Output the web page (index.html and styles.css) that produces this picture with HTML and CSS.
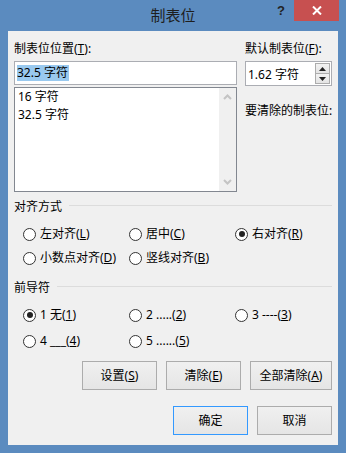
FILE: index.html
```html
<!DOCTYPE html>
<html lang="zh-CN">
<head>
  <meta charset="UTF-8">
  <title>制表位</title>
  <link rel="stylesheet" href="styles.css">
</head>
<body>
  <div class="window">
    <div class="titlebar">
      <div class="title">制表位</div>
      <div class="help">?</div>
      <div class="close">
        <svg width="10" height="9" viewBox="0 0 10 9">
          <path d="M1 0.5 L9 8.5 M9 0.5 L1 8.5" stroke="#fff" stroke-width="2" fill="none"/>
        </svg>
      </div>
    </div>

    <div class="dialog">
      <div class="top">
        <div class="col">
          <div class="label">制表位位置(<u>T</u>):</div>
          <div class="textbox"><span class="sel">32.5 字符</span></div>
          <div class="listbox">
            <div class="items">
              <div>16 字符</div>
              <div>32.5 字符</div>
            </div>
            <div class="scroll">
              <svg width="9" height="6" viewBox="0 0 9 6"><path d="M1 5 L4.5 1.5 L8 5" stroke="#c4c4c4" stroke-width="2" fill="none"/></svg>
              <svg width="9" height="6" viewBox="0 0 9 6"><path d="M1 1 L4.5 4.5 L8 1" stroke="#c4c4c4" stroke-width="2" fill="none"/></svg>
            </div>
          </div>
        </div>
        <div class="col">
          <div class="label">默认制表位(<u>F</u>):</div>
          <div class="spin">
            <span>1.62 字符</span>
            <div class="spin-btns">
              <div class="spin-btn"><svg width="7" height="4" viewBox="0 0 7 4"><path d="M0 4 L3.5 0 L7 4 Z" fill="#222"/></svg></div>
              <div class="spin-btn"><svg width="7" height="4" viewBox="0 0 7 4"><path d="M0 0 L3.5 4 L7 0 Z" fill="#222"/></svg></div>
            </div>
          </div>
          <div class="label clear-label">要清除的制表位:</div>
        </div>
      </div>

      <div class="group-head">对齐方式</div>
      <div class="radios">
        <div class="radio"><span class="dot"></span><span>左对齐(<u>L</u>)</span></div>
        <div class="radio"><span class="dot"></span><span>居中(<u>C</u>)</span></div>
        <div class="radio"><span class="dot on"></span><span>右对齐(<u>R</u>)</span></div>
        <div class="radio"><span class="dot"></span><span>小数点对齐(<u>D</u>)</span></div>
        <div class="radio"><span class="dot"></span><span>竖线对齐(<u>B</u>)</span></div>
      </div>

      <div class="group-head second">前导符</div>
      <div class="radios leader">
        <div class="radio"><span class="dot on"></span><span>1 无(<u>1</u>)</span></div>
        <div class="radio"><span class="dot"></span><span>2 .....(<u>2</u>)</span></div>
        <div class="radio"><span class="dot"></span><span>3 ----(<u>3</u>)</span></div>
        <div class="radio"><span class="dot"></span><span>4 ___(<u>4</u>)</span></div>
        <div class="radio"><span class="dot"></span><span>5 ......(<u>5</u>)</span></div>
      </div>

      <div class="actions">
        <div class="btn"><span>设置(<u>S</u>)</span></div>
        <div class="btn"><span>清除(<u>E</u>)</span></div>
        <div class="btn wide"><span>全部清除(<u>A</u>)</span></div>
      </div>

      <div class="actions footer">
        <div class="btn default">确定</div>
        <div class="btn">取消</div>
      </div>
    </div>
  </div>
</body>
</html>
```

FILE: styles.css
```css
* {
  box-sizing: border-box;
}

body {
  margin: 0;
  font-family: "Noto Sans", "Noto Sans CJK SC", sans-serif;
  font-size: 12px;
  color: #000;
}

u {
  text-underline-offset: 1px;
}

.window {
  width: 346px;
  height: 453px;
  background: #5b8bbf;
  display: flex;
  flex-direction: column;
  padding-bottom: 8px;
}

/* title bar */
.titlebar {
  height: 31px;
  display: flex;
  align-items: flex-start;
  padding: 0 7px 0 76px;
}

.title {
  flex: 1;
  text-align: center;
  font-size: 15px;
  line-height: 30px;
  color: #1e1e1e;
}

.help {
  width: 22px;
  height: 21px;
  margin-right: 2px;
  text-align: center;
  font-family: "Liberation Sans", sans-serif;
  font-weight: bold;
  font-size: 13px;
  line-height: 22px;
  color: #222;
}

.close {
  width: 45px;
  height: 21px;
  background: #c75050;
  display: flex;
  align-items: center;
  justify-content: center;
}

/* dialog body */
.dialog {
  flex: 1;
  margin: 0 8px;
  background: #f0f0f0;
  padding: 10px 6px 0;
  display: flex;
  flex-direction: column;
}

.top {
  display: grid;
  grid-template-columns: 223px 87px;
  column-gap: 8px;
}

.label {
  line-height: 16px;
  white-space: nowrap;
}

.textbox {
  margin-top: 4px;
  height: 24px;
  border: 1px solid #abadb3;
  background: #fff;
  padding: 2px 2px 0;
}

.sel {
  display: inline-block;
  background: #99c9ef;
  line-height: 16px;
  padding-right: 1px;
}

.listbox {
  margin-top: 2px;
  height: 105px;
  border: 1px solid #828790;
  background: #fff;
  display: flex;
}

.items {
  flex: 1;
  padding-left: 3px;
  line-height: 18px;
}

.scroll {
  width: 17px;
  background: #f0f0f0;
  display: flex;
  flex-direction: column;
  justify-content: space-between;
  align-items: center;
  padding: 6px 0 6px;
}

.spin {
  margin-top: 4px;
  height: 25px;
  border: 1px solid #abadb3;
  background: #fff;
  display: flex;
  align-items: center;
  padding: 0 1px 0 2px;
}

.spin-btns {
  margin-left: auto;
  width: 15px;
  display: flex;
  flex-direction: column;
}

.spin-btn {
  height: 11px;
  border: 1px solid #acacac;
  background: linear-gradient(#f2f2f2, #e4e4e4);
  display: flex;
  align-items: center;
  justify-content: center;
}

.spin-btn + .spin-btn {
  margin-top: -1px;
}

.clear-label {
  margin-top: 17px;
}

/* groups */
.group-head {
  display: flex;
  align-items: center;
  line-height: 16px;
  margin-top: 7px;
}

.group-head::after {
  content: "";
  flex: 1;
  height: 1px;
  background: #dcdcdc;
  margin: -3px 0 0 7px;
}

.group-head.second {
  margin-top: 12px;
}

.radios {
  display: grid;
  grid-template-columns: 106px 106px 1fr;
  row-gap: 4px;
  margin: 9px 0 0 9px;
}

.radios.leader {
  row-gap: 6px;
}

.radio {
  display: flex;
  align-items: center;
  gap: 4px;
  height: 20px;
  line-height: 16px;
  white-space: nowrap;
}

.dot {
  width: 13px;
  height: 13px;
  flex: none;
  border: 1px solid #333;
  border-radius: 50%;
  background: #fff;
  display: flex;
  align-items: center;
  justify-content: center;
}

.dot.on::after {
  content: "";
  width: 6px;
  height: 6px;
  border-radius: 50%;
  background: #222;
}

/* buttons */
.actions {
  display: flex;
  justify-content: flex-end;
  gap: 9px;
  margin-top: 10px;
}

.actions.footer {
  margin-top: 16px;
}

.btn {
  width: 75px;
  height: 29px;
  border: 1px solid #acacac;
  background: linear-gradient(#f0f0f0, #e5e5e5);
  display: flex;
  align-items: center;
  justify-content: center;
  line-height: 16px;
}

.btn.wide {
  width: 82px;
}

.btn.default {
  border-color: #3399ff;
}
```
